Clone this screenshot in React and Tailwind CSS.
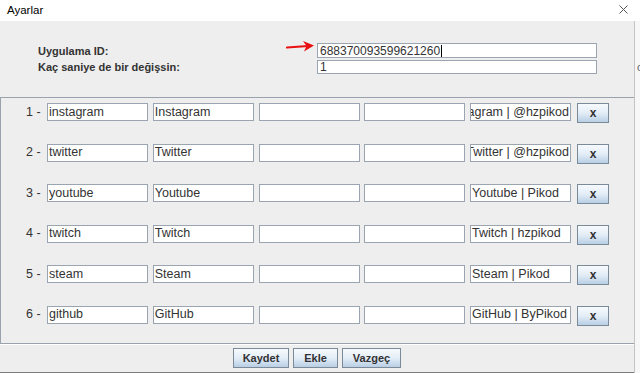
import React from 'react';

const rows = [
  { key: 'instagram', name: 'Instagram', title: 'Instagram | @hzpikod', scrolled: true },
  { key: 'twitter', name: 'Twitter', title: 'Twitter | @hzpikod', scrolled: true },
  { key: 'youtube', name: 'Youtube', title: 'Youtube | Pikod' },
  { key: 'twitch', name: 'Twitch', title: 'Twitch | hzpikod' },
  { key: 'steam', name: 'Steam', title: 'Steam | Pikod' },
  { key: 'github', name: 'GitHub', title: 'GitHub | ByPikod' },
];

function Field({ value, scrolled }) {
  return (
    <div
      className={`w-[101px] h-[18px] shrink-0 bg-white border border-[#9aa5b1] overflow-hidden whitespace-nowrap flex items-center px-[1px] text-[12.5px] text-[#333] ${
        scrolled ? 'justify-end' : ''
      }`}
    >
      {value}
    </div>
  );
}

function MetalButton({ children, className = '' }) {
  return (
    <button
      className={`h-[20px] border border-[#7a8a99] bg-gradient-to-b from-[#f7fafd] via-[#e3edf7] to-[#b9cfe5] text-[11px] font-bold text-[#333] ${className}`}
    >
      {children}
    </button>
  );
}

export default function App() {
  return (
    <div
      className="w-[640px] h-[373px] bg-white flex flex-col overflow-hidden"
      style={{ fontFamily: '"Liberation Sans", Arial, sans-serif' }}
    >
      {/* title bar */}
      <div className="h-[21px] shrink-0 flex items-center justify-between pl-[7px] pr-[12px]">
        <span className="text-[11.5px] text-black">Ayarlar</span>
        <svg width="9" height="9" viewBox="0 0 9 9" className="mt-[-2px]">
          <path d="M0.5 0.5 L8.5 8.5 M8.5 0.5 L0.5 8.5" stroke="#555" strokeWidth="1" />
        </svg>
      </div>

      <div className="flex flex-1 min-h-0">
        <div className="w-[635px] shrink-0 bg-[#eeeeee] border-r border-[#c4c4c4] flex flex-col">
          {/* top settings */}
          <div className="h-[76px] shrink-0 relative pt-[22px]">
            <div className="flex">
              <div className="w-[317px] pl-[38px] flex flex-col text-[11px] font-bold text-[#333]">
                <div className="h-[16px] flex items-center">Uygulama ID:</div>
                <div className="h-[16px] flex items-center">Kaç saniye de bir değişsin:</div>
              </div>
              <div className="flex flex-col gap-[2px]">
                <div className="w-[280px] h-[15px] bg-white border border-[#9aa5b1] flex items-center px-[2px] text-[12px] text-[#333]">
                  688370093599621260
                  <span className="inline-block w-[1px] h-[12px] bg-black ml-[1px]" />
                </div>
                <div className="w-[280px] h-[14px] bg-white border border-[#9aa5b1] flex items-center px-[2px] text-[12px] text-[#333]">
                  1
                </div>
              </div>
            </div>
            <svg
              className="absolute left-[286px] top-[19px]"
              width="30"
              height="13"
              viewBox="0 0 30 13"
            >
              <path d="M1 7.5 L22 6" stroke="#e81010" strokeWidth="2.2" strokeLinecap="round" />
              <path d="M17 1 L28 5.5 L18 11.5 L20.5 6 Z" fill="#e81010" />
            </svg>
          </div>

          {/* rows panel */}
          <div className="h-[247px] shrink-0 border border-r-0 border-[#9aa3ad] flex flex-col gap-[22.5px] pt-[5px] pl-[25px]">
            {rows.map((r, i) => (
              <div key={r.key} className="flex items-start h-[18px]">
                <div className="w-[21px] h-[18px] flex items-center text-[12.5px] text-[#333]">
                  {i + 1} -
                </div>
                <div className="flex gap-[4.75px]">
                  <Field value={r.key} />
                  <Field value={r.name} />
                  <Field value="" />
                  <Field value="" />
                  <Field value={r.title} scrolled={r.scrolled} />
                </div>
                <MetalButton className="w-[32px] ml-[6px] text-[12px]">x</MetalButton>
              </div>
            ))}
          </div>

          {/* buttons */}
          <div className="flex-1 border-t border-white flex justify-center items-start pt-[3px] gap-[4px]">
            <MetalButton className="w-[56px]">Kaydet</MetalButton>
            <MetalButton className="w-[45px]">Ekle</MetalButton>
            <MetalButton className="w-[59px]">Vazgeç</MetalButton>
          </div>
          <div className="h-[1px] bg-[#7d7d7d]" />
        </div>
        <div className="flex-1 bg-[#f7f7f7] relative">
          <span className="absolute left-[2px] top-[38px] text-[11px] text-[#666]">o</span>
        </div>
      </div>
    </div>
  );
}
